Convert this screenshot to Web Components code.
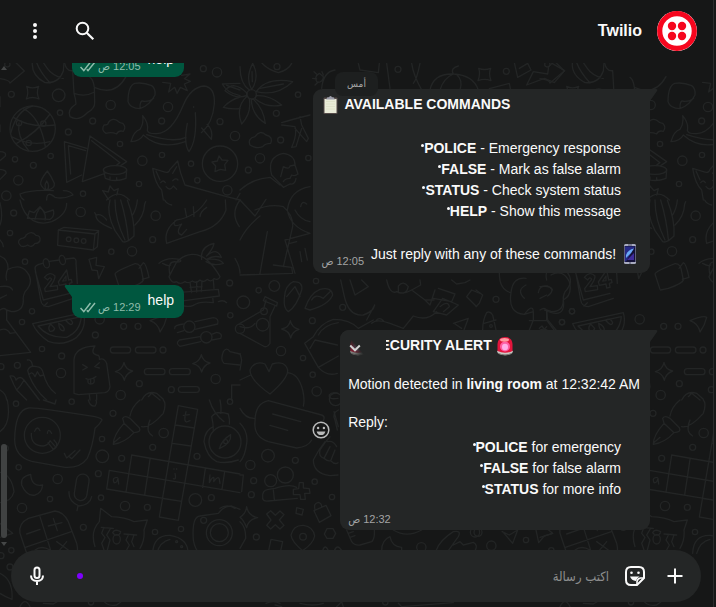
<!DOCTYPE html>
<html lang="ar" dir="rtl">
<head>
<meta charset="utf-8">
<title>Twilio</title>
<style>
  html, body { height: 100%; }
  body {
    margin: 0;
    background: #161717;
    color: #fafafa;
    font-family: "Liberation Sans", "DejaVu Sans Condensed", "DejaVu Sans", sans-serif;
    font-size: 14px;
    line-height: 21px;
  }
  b { font-weight: 700; }
</style>
</head>
<body>
<chat-app>
  <chat-header slot="header" name="Twilio"></chat-header>
  <chat-bubble side="out" time="12:05 ص">help</chat-bubble>
  <chat-bubble side="in" time="12:05 ص">
    <message-title slot="title"><emoji-icon slot="before" name="clipboard"></emoji-icon>AVAILABLE COMMANDS</message-title>
    <command-list slot="block">
      <command-item><b slot="key">POLICE</b> - Emergency response</command-item>
      <command-item><b slot="key">FALSE</b> - Mark as false alarm</command-item>
      <command-item><b slot="key">STATUS</b> - Check system status</command-item>
      <command-item><b slot="key">HELP</b> - Show this message</command-item>
    </command-list>
    Just reply with any of these commands! <emoji-icon name="phone"></emoji-icon>
  </chat-bubble>
  <chat-bubble side="out" time="12:29 ص">help</chat-bubble>
  <chat-bubble side="in" time="12:32 ص" active>
    <message-title slot="title"><emoji-icon slot="before" name="siren"></emoji-icon>SECURITY ALERT<emoji-icon slot="after" name="siren"></emoji-icon></message-title>
    <message-text slot="block">Motion detected in <b>living room</b> at 12:32:42 AM</message-text>
    <message-text slot="block">Reply:</message-text>
    <command-list slot="block" compact>
      <command-item><b slot="key">POLICE</b> for emergency</command-item>
      <command-item><b slot="key">FALSE</b> for false alarm</command-item>
      <command-item><b slot="key">STATUS</b> for more info</command-item>
    </command-list>
  </chat-bubble>
  <chat-composer slot="composer"></chat-composer>
</chat-app>

<script>
const define = (name, html, setup) => {
  const template = document.createElement('template');
  template.innerHTML = html;
  customElements.define(name, class extends HTMLElement {
    connectedCallback() {
      if (this.shadowRoot) return;
      const root = this.attachShadow({ mode: 'open' });
      root.append(template.content.cloneNode(true));
      if (setup) setup(this, root);
    }
  });
};

define('chat-wallpaper', `
  <style>
    :host { display: block; overflow: hidden; }
    svg { display: block; width: 100%; height: 100%; direction: ltr; }
    #tile { fill: none; stroke: #232525; stroke-width: 4; stroke-linecap: round; stroke-linejoin: round; }
  </style>
  <svg aria-hidden="true">
    <g id="tile">
      <g id="nw" transform="scale(.33333)">
        <path d="M0 236Q28 240 30 249L73 213L48 188M97 188Q94 226 135 248Q176 252 190 213L192 188M130 188L142 205Q155 225 190 236M110 188Q120 215 150 249"/>
        <path d="M80 259Q97 268 116 259Q108 278 117 297Q97 288 79 297Q87 278 80 259Z"/>
        <path d="M194 190Q200 215 218 212L222 280Q228 300 228 312Q200 330 210 350Q235 366 262 338Q285 325 284 308L283 262Q280 238 270 232M222 280Q255 292 284 276M283 262Q345 290 378 230"/>
        <path d="M404 250Q430 246 455 257Q467 265 465 285Q450 315 420 326Q390 326 384 305Q384 258 404 250ZM420 325Q419 298 432 304Q450 305 461 295"/>
        <path d="M488 247L512 250L506 276L524 262L531 280L541 262L562 272L553 252L571 244L553 236L570 222L545 226"/>
        <path d="M393 424Q402 393 420 388Q432 370 428 347Q447 370 442 392Q445 402 470 401Q515 400 550 315Q572 262 612 258Q646 262 643 312Q638 370 604 398M393 425Q420 424 430 405Q480 452 558 424M440 404Q520 430 558 412M562 370Q550 430 567 455Q592 420 586 338M605 384L634 418Q640 390 621 373M581 320V322"/>
        <circle cx="98" cy="386" r="68"/>
        <path d="M40 352Q90 385 165 375M98 318Q50 330 32 400M70 326Q120 350 136 440M150 342Q110 400 50 430M34 410Q90 440 150 425M57 369Q50 410 86 452"/>
        <path d="M318 400Q302 390 312 375Q325 375 325 368Q335 352 352 362Q358 370 368 370Q380 382 370 394Q355 390 350 402Q335 395 318 400Z"/>
        <path d="M260 445L193 425L200 547L245 525M257 452L205 437L212 522M315 520L247 545L270 408L380 485L362 497M275 422L360 488L350 495M311 512L316 535Q345 548 378 535L380 510M330 540V531M350 542V533"/>
        <ellipse cx="345" cy="510" rx="35" ry="13"/>
        <circle cx="660" cy="491" r="53"/>
        <path d="M657 468L666 480L684 481L674 494L677 511L661 508L645 515L647 498L636 486L652 483Z"/>
        <path d="M142 513Q120 540 122 553Q130 570 142 570Q165 565 163 550Q155 530 142 513ZM140 543Q130 560 140 572Q152 560 140 543ZM60 582Q95 568 160 572M190 572Q212 572 219 585Q190 598 165 592Q140 570 140 600M60 582Q62 595 72 600"/>
        <path d="M458 505L490 515Q506 522 510 508L533 483Q540 520 555 555L680 590L720 600M458 505Q465 550 485 570L490 600M468 513L480 540M530 500L518 520M482 548Q490 538 496 548M518 542Q528 532 534 540M498 560Q510 575 520 558L530 568"/>
        <path d="M720 250Q690 250 667 252Q680 278 720 287M720 326Q690 328 670 322Q690 300 720 291M680 256L720 270"/>
        <path d="M325 598L308 572L325 576L330 558L342 572L355 566L350 585M320 600Q355 565 388 600M0 455Q20 455 16 468L0 482M0 508Q20 510 18 520L0 538M720 580L708 600M0 290V320M0 375V395"/>
      </g>
      <g id="w" transform="translate(0 200) scale(.33333)">
        <path d="M60 0Q70 45 100 62Q125 75 155 65Q200 45 200 10M82 55L88 33L102 38L120 20L135 38L160 30Q165 50 150 58ZM105 58Q108 40 120 22Q140 40 135 60M0 8Q10 50 0 75"/>
        <path d="M330 0Q318 40 345 92L368 125Q380 130 402 108Q405 60 382 0M345 0Q345 60 375 120M362 0Q380 60 385 118M288 45Q285 65 335 85M288 45Q305 40 320 60M434 12Q432 50 405 75M398 45Q410 25 412 0M288 45L284 38M434 12L437 5"/>
        <path d="M500 130Q490 90 530 60Q590 50 620 0M500 130L600 95Q660 80 678 30L676 0M525 62Q515 85 545 72Q525 100 545 105L560 88M555 25L560 52M580 20L582 50M600 50Q600 35 620 22M494 0Q500 12 515 15"/>
        <path d="M63 138Q48 125 63 116Q78 113 78 105Q95 90 108 106Q122 106 120 122Q115 132 105 130Q95 145 83 135Q72 142 63 138Z"/>
        <path d="M175 90L285 102L280 150L173 136ZM175 90L192 82L296 92L285 102M296 92L292 140L280 150"/>
        <path d="M106 210Q100 195 128 190M148 184L178 180M198 177L222 174Q230 178 228 190L232 250M106 210L122 300Q125 320 145 320L220 295M106 215L130 300L210 280M132 318L142 308"/>
        <ellipse cx="139" cy="190" rx="9" ry="14" transform="rotate(-15 139 190)"/><ellipse cx="187" cy="180" rx="9" ry="14" transform="rotate(-15 187 180)"/>
        <path d="M133 232Q150 212 165 228Q166 238 150 260L172 257L173 269L136 275L134 266L155 238Q150 228 143 240ZM200 210L175 246L178 256L198 252L200 264L210 262L208 250L216 248L214 238L206 240ZM198 228L188 243L198 242Z"/>
        <path d="M267 178L290 172L288 196L313 200L296 236L292 212L276 210Z"/>
        <path d="M345 222Q345 215 405 191Q422 190 425 215L430 240Q428 250 385 265L362 270M345 222L360 268M417 205L430 188Q438 190 447 232L427 238"/>
        <path d="M507 230L530 186Q550 165 575 163Q620 160 660 230Q655 242 642 236Q632 248 622 238Q610 250 600 240Q588 252 577 243Q565 252 555 245Q540 255 530 245Q515 252 507 230ZM477 190Q500 170 538 178Q550 185 530 186Q500 180 510 225M488 190Q505 200 512 195M605 178Q600 140 642 130Q640 145 620 168Q650 140 664 172Q640 165 620 178Q660 175 670 190Q640 200 618 185"/>
        <path d="M530 278L655 268L658 288L530 305M570 248L575 278M590 245V276M606 243L604 275M570 262L606 260M640 240L642 265M655 305Q670 298 680 308M530 310Q560 325 580 316Q600 302 640 308L638 292M540 302V318"/>
        <path d="M98 371L250 338Q262 380 230 412Q190 440 145 424Q110 400 98 371ZM114 378L244 350Q240 395 200 412Q145 415 114 378ZM152 372Q142 385 150 394Q162 395 164 385ZM176 370Q178 395 192 392Q196 380 176 370ZM196 360Q212 352 218 368Q215 382 196 360Z"/>
        <path d="M0 168Q25 178 24 205Q15 225 20 240M24 208Q60 190 80 215Q105 245 75 275Q68 290 70 300Q70 335 35 335L20 330V360L92 457L0 467M0 330Q15 320 20 332M0 260Q30 255 38 270M0 390Q20 382 30 400L45 398"/>
        <path d="M450 362Q490 345 500 352Q495 375 480 396Q475 370 450 362ZM0 295L20 285"/>
        <path d="M524 386Q522 375 550 372M585 365L640 353Q658 355 653 372L585 388M552 392L532 398M540 439Q525 430 538 420L600 410M635 403L650 397Q670 400 662 415L636 420M602 425L540 439"/>
        <path d="M222 580L222 480Q225 440 285 438Q270 460 290 465Q300 465 298 478Q312 472 320 490L330 560Q328 575 315 578L235 584ZM268 584L270 600M290 584V600M248 494L262 502L248 510M298 488L284 500L298 504M258 536Q270 542 288 530M264 540Q262 552 272 552Q286 552 282 536M272 540V548"/>
        <rect x="331" y="441" width="61" height="18" rx="9"/><rect x="406" y="441" width="62" height="18" rx="9"/><rect x="433" y="506" width="62" height="18" rx="9"/><rect x="508" y="506" width="63" height="18" rx="9"/><rect x="535" y="560" width="63" height="17" rx="9"/>
        <path d="M372 487Q376 508 398 513Q378 520 373 541Q368 520 346 515Q368 508 372 487ZM604 464Q608 484 630 489Q610 496 605 516Q600 496 578 491Q600 484 604 464Z"/>
        <path d="M82 480Q95 478 97 495M83 512Q88 495 110 500Q125 500 130 520Q140 560 166 580M83 512L87 525Q95 510 105 530L112 515L120 528L130 525M88 528Q105 570 140 600M30 528Q45 525 48 540Q60 525 72 540Q65 555 50 570L42 555ZM72 540Q95 570 118 600M50 570L80 600"/>
        <path d="M720 495L672 490Q660 480 670 455Q680 440 690 455L720 462M425 600Q440 570 470 580L490 598M445 590L455 580L480 600M695 600V555L720 555M720 0Q690 40 718 80M705 175Q720 200 720 220M0 120Q10 130 10 140M0 570Q18 580 20 600"/>
      </g>
      <g id="sw" transform="translate(0 400) scale(.33333)">
        <path d="M44 120Q45 30 85 24Q100 20 285 50Q305 55 306 60Q300 72 285 85Q278 140 262 175Q240 205 195 202L95 184Q45 170 44 120ZM193 160L200 174L225 152M208 170L215 176L240 150M94 100Q92 138 130 138Q145 135 150 122M104 94Q112 75 120 92M142 100Q145 82 155 100M144 128L160 148Q172 142 170 130L162 120M150 122L168 142"/>
        <circle cx="127" cy="106" r="54"/>
        <path d="M340 133Q340 105 372 70L402 98Q375 128 340 133ZM340 130L360 112M372 70L368 55Q375 45 390 55L418 83Q425 97 402 98M390 48Q395 20 420 0M425 80Q450 85 490 40Q500 10 490 0M450 60Q435 95 458 108"/>
        <path d="M535 17L593 28L535 361L478 351L535 17M526 75L583 84M517 130L573 138M720 222L395 165L378 276M720 278L328 211L320 267L545 304M450 178L434 285M616 206L608 262M674 215L666 268M490 296L545 304"/>
        <path d="M558 35Q550 65 560 66L570 62M550 46L568 44M352 232Q335 232 342 248Q350 250 354 235L356 252M522 206V208M530 206V208M525 220Q530 240 520 236M628 240L630 225L628 248Q640 225 642 235L641 245Q655 225 658 238L660 250"/>
        <path d="M640 92Q640 70 635 50Q650 30 685 42Q690 60 688 72M628 0Q640 40 672 65M660 0Q665 25 662 40M612 125Q615 90 640 80M612 125Q620 170 650 185Q680 192 715 180M658 146Q665 120 692 104Q695 130 658 146Z"/>
        <circle cx="675" cy="126" r="48"/><circle cx="677" cy="125" r="6"/>
        <path d="M92 223Q60 230 65 255Q80 290 105 285Q125 280 128 255Q95 262 92 223Z"/>
        <rect x="226" y="222" width="38" height="80" rx="19" transform="rotate(9 245 262)"/>
        <path d="M207 275Q205 305 237 318Q270 315 275 290M234 318L231 332"/>
        <path d="M60 400Q55 370 85 355L165 333Q190 335 205 365L230 430Q235 450 230 460M60 400L80 460M76 442L214 395M120 350L155 460M80 402L120 388M145 378L186 368M160 355L172 392M170 425L205 450M200 425L175 455M105 450Q125 435 150 450"/>
        <path d="M285 440Q270 395 298 365L302 325L335 350Q375 352 402 365L442 360L432 390Q435 420 420 445M304 382L340 385M372 402L410 405M312 382L305 400L315 412L305 430L312 450M330 388L320 405L330 420L322 450M385 405L378 420L388 435L380 450M402 405L395 425L402 440M338 398Q345 385 362 395Q360 408 345 405Z"/>
        <ellipse cx="350" cy="418" rx="11" ry="14"/>
        <path d="M458 460Q460 405 510 406Q565 415 564 460M470 460Q480 425 510 418M580 420Q575 350 600 348L655 340Q670 318 695 318L720 328M580 420Q585 450 600 460M660 325Q680 310 705 325"/>
        <circle cx="658" cy="398" r="39"/><circle cx="658" cy="398" r="27"/>
        <path d="M0 217Q35 225 42 275Q35 305 0 308M0 370L38 400L0 412M0 520Q40 540 36 598Q15 590 0 580M265 0Q270 20 285 18Q292 10 288 0M130 0L165 12L168 0M22 0Q35 70 0 95M60 620Q75 590 90 620M130 610L160 612L180 600M310 600Q320 620 350 615L370 600"/>
      </g>
      <g id="n" transform="translate(240 60) scale(.33333)">
        <circle cx="35" cy="103" r="14"/>
        <path d="M35 89Q15 55 38 10Q60 50 35 89ZM49 95Q80 50 158 65Q110 110 49 95ZM49 107Q90 105 125 135Q80 145 45 116ZM40 118Q70 145 76 190Q35 165 34 118ZM22 108Q-15 140 5 192Q35 160 28 117ZM20 98Q-20 60 -45 92Q-10 120 20 106ZM28 90Q0 70 0 20"/>
        <path d="M66 10Q85 30 115 38Q145 30 155 10M36 35L37 65M60 85L130 72"/>
        <path d="M30 255Q22 235 45 230Q60 208 78 225Q100 230 92 250Q75 250 68 260Q50 268 30 255ZM125 188Q150 180 210 165M125 195L165 200Q172 225 155 262L168 260L185 205M180 170L185 195L205 235L200 245L165 205"/>
        <path d="M95 345Q80 290 130 280Q165 285 165 315L150 318Q148 330 130 320Q125 340 122 350M165 315L174 342Q165 350 155 345L150 355Q135 355 130 365M95 345L130 382L150 372Q165 375 168 355"/>
        <path d="M0 390Q40 355 90 352L120 375M0 420L45 468L78 418M45 450Q90 430 130 440Q160 465 158 500L130 620M60 468Q20 500 0 540M82 515L60 640M100 615L155 622L158 640L0 645M210 380Q150 390 142 450Q150 500 210 520M182 440Q185 420 200 432M165 450Q180 480 210 485M135 540L210 520M135 540L165 640M150 550L170 545M180 575L185 605M195 565L202 600"/>
        <path d="M238 40Q220 50 232 68Q250 65 250 50ZM222 35L232 44M218 55L230 57M225 75L235 66M246 35L250 45M245 85Q250 35 285 30M355 10L360 30L415 38L418 10M440 10L450 85M515 10Q520 45 545 90M540 10Q530 60 520 70M570 90Q580 40 640 42Q700 45 715 90M600 90Q610 55 640 42M660 90Q670 60 650 44M640 42Q630 25 655 18M375 45V80M400 45V80"/>
      </g>
      <g id="ne" transform="translate(476 0) scale(.33333)">
        <path d="M8 205Q25 212 44 205Q37 222 45 242Q25 234 6 242Q14 222 8 205ZM115 188L125 232L165 210L155 190L130 205M152 255L172 215L215 222L218 200L228 190L266 212L235 248L205 235ZM40 266L100 250L103 266"/>
      </g>
      <g id="mid" transform="translate(240 280) scale(.33333)">
        <path d="M133 55Q135 15 160 5Q190 5 185 30Q170 80 145 95Q130 85 133 55ZM140 50L165 20L180 50M195 85Q210 40 240 28Q275 20 278 45Q265 75 210 90ZM215 60Q225 40 250 55L270 35"/>
        <path d="M75 50L112 68L110 78L70 62ZM78 60L70 90L0 130M105 78L90 110V190Q80 205 70 198L0 160M0 140Q30 150 45 130"/>
        <circle cx="68" cy="134" r="19"/><circle cx="72" cy="94" r="10"/>
        <path d="M151 122Q155 143 177 148Q157 154 152 174Q148 153 125 147Q148 142 151 122Z"/>
        <path d="M194 190L220 170Q240 130 280 118Q330 118 355 145L400 120M194 190L235 262L295 228M210 205L225 180L292 195M235 262Q260 290 292 280M235 165Q250 135 295 128M395 130Q410 115 450 130L490 145M408 122Q418 110 430 122"/>
        <path d="M302 0L312 45Q325 110 370 105Q400 95 404 75L380 120M330 0L345 45L385 20L365 0M440 0Q450 45 470 35Q490 45 515 30L555 60L570 75L585 30M475 18Q490 0 505 20Q500 45 475 38ZM540 0L542 15L515 30M555 60L582 60M595 25L645 42L635 65L580 55M608 55L655 75L620 105L580 95ZM600 80Q625 60 628 80L610 95M490 145L520 108Q560 125 590 95M680 50L695 30L720 40M680 50L710 80M640 130L685 115L672 150M645 132L665 145M635 0L650 12L675 8L690 0"/>
        <path d="M90 342Q30 300 30 270Q45 240 75 252L87 275L97 252Q135 240 143 270Q145 295 90 342ZM142 278Q175 280 188 330Q195 360 190 378M0 300L32 285M45 425Q45 370 85 362L245 405Q260 410 245 430M45 425Q40 470 85 485L170 504Q205 500 215 480M98 402L182 425M90 436L143 451M0 385Q15 415 42 415M0 430Q25 455 20 490Q15 530 0 545M0 220L5 240L0 270"/>
        <path d="M295 390Q275 400 285 420L292 450M282 395L295 440M294 355Q265 360 268 345Q275 335 294 340"/>
      </g>
      <g id="s" transform="translate(240 430) scale(.33333)">
        <path d="M220 90Q235 60 255 35M220 90Q220 130 270 137L294 135M240 60Q255 35 270 20M240 60Q235 80 252 85Q262 95 272 92Q285 105 294 98M252 85L270 50M272 92L285 60M262 35Q280 30 290 50"/>
        <circle cx="136" cy="135" r="24"/><circle cx="92" cy="152" r="18"/>
        <path d="M68 205Q65 180 85 178L105 175Q150 160 170 172M68 205Q70 215 85 213L172 205M100 180L103 208M178 158H190V174L208 176L210 190L194 190L196 208L182 208L180 194L160 194L160 178L176 176Z"/>
        <path d="M20 230Q25 258 53 263Q25 268 20 293Q10 268 0 262Q18 250 20 230ZM80 252L92 242L106 256L120 243L132 254L118 270L132 286L120 297L106 284L92 297L80 286L93 270ZM170 233L190 238L186 255L168 250ZM222 242L258 226L273 257L238 277ZM225 238Q220 220 235 217Q245 220 245 230M253 312L261 296H279L287 310L279 325H261Z"/>
        <path d="M188 362Q155 335 153 315Q160 285 190 286Q220 290 224 318Q220 340 188 362ZM93 328L128 335L122 362M93 328L86 362M0 275Q18 290 17 325L0 355M0 135L10 135L5 185M248 362Q255 340 265 362M283 362Q292 340 305 362M320 300L335 335Q345 348 360 345L395 335Q405 325 403 300M325 310L340 305M330 322L345 317M425 362Q425 330 450 320Q455 350 485 352V362M460 300Q500 325 545 300M588 362Q600 330 640 305Q665 300 655 320L625 362M640 345L660 335L670 345L700 337Q715 345 705 362"/>
        <circle cx="189" cy="320" r="10"/>
        <path d="M78 520Q100 510 120 520M105 525L125 530M290 530L305 515L310 530M475 520L485 530L640 518M180 520Q220 530 250 520"/>
      </g>
      <g id="e" transform="translate(476 270) scale(.33333)">
        <path d="M70 10Q70 60 105 68Q95 130 145 133L172 125V150L160 180M145 133Q170 100 172 125M105 68Q110 20 150 25M215 78Q240 60 215 48Q190 45 187 68M145 85Q120 60 150 45M205 120Q270 150 262 90Q290 75 280 35Q260 -5 225 15M212 125L215 150L240 180M190 175L198 168L205 178L212 170M160 152H215M0 60L20 75L10 100L0 110M20 180Q20 150 32 128Q42 122 50 135L60 180M24 160L60 150"/>
      </g>
      <g id="se" transform="translate(476 430) scale(.33333)">
        <path d="M78 305L100 315L125 300M80 305L110 340L125 300M180 300L188 338L205 318L230 310"/>
      </g>
    </g>
  </svg>`, (host, root) => {
  const NS = 'http://www.w3.org/2000/svg';
  // Small bubbles between the doodles: x, y, radius in each region's own units.
  const dots = {
    nw: [[176,286,19],[34,283,9],[180,338,8],[278,363,9],[332,315,14],[504,321,14],[610,206,9],[651,217,14],[205,396,9],[485,363,9],[660,365,9],[705,408,14],[360,432,8],[45,478,8],[100,496,9],[152,468,8],[55,541,14],[19,587,14],[249,581,8],[427,482,14],[486,465,8],[573,491,8],[417,552,8],[592,541,8],[682,571,14],[57,369,8],[130,371,8],[86,429,8],[22,193,8]],
    w: [[41,39,9],[242,36,14],[467,47,14],[30,99,8],[206,118,7],[229,121,7],[251,123,7],[334,155,8],[396,154,14],[458,119,9],[75,185,8],[689,249,9],[96,334,8],[66,366,8],[299,358,14],[371,379,9],[414,379,9],[286,405,9],[691,346,8],[568,380,17],[619,412,17],[126,447,8],[185,468,9],[489,450,9],[183,519,14],[52,496,9],[3,500,9],[418,551,9],[514,569,9],[647,537,14],[362,585,14],[720,386,14]],
    sw: [[48,11,8],[339,40,9],[306,117,8],[491,99,14],[458,142,9],[307,169,19],[365,175,9],[591,169,9],[16,145,9],[56,202,8],[173,237,14],[295,221,9],[150,297,8],[303,293,8],[375,318,14],[442,322,9],[586,300,19],[634,293,9],[66,324,14],[250,382,9],[465,396,8],[543,387,8],[611,361,9],[34,451,8],[3,467,9],[30,501,9],[215,5,8],[690,5,8],[273,607,8],[530,425,3],[545,440,3]],
    n: [[111,20,9],[174,104,8],[109,160,9],[122,240,9],[60,295,14],[25,330,9],[205,294,8],[474,28,9]],
    ne: [[91,214,9]],
    mid: [[56,31,8],[103,18,16],[10,67,19],[228,3,8],[308,82,9],[217,122,9],[123,213,14],[189,234,8],[218,284,8],[230,334,14],[287,358,19]],
    s: [[84,77,19],[166,91,9],[31,105,14],[41,152,9],[224,155,8],[34,194,9],[276,201,8],[49,321,9],[544,352,14],[705,307,14],[436,517,8]],
    e: [[60,88,9],[288,124,8],[258,157,8],[45,168,4]],
    se: [[46,347,14],[150,330,8],[6,307,12]]
  };
  for (const [id, list] of Object.entries(dots)) {
    for (const [x, y, r] of list) {
      const c = document.createElementNS(NS, 'circle');
      c.setAttribute('cx', x); c.setAttribute('cy', y); c.setAttribute('r', r);
      root.getElementById(id).append(c);
    }
  }
  const svg = root.querySelector('svg');
  for (const x of [540, 1080, 1620]) {
    const use = document.createElementNS(NS, 'use');
    use.setAttribute('href', '#tile');
    use.setAttribute('x', x);
    svg.append(use);
  }
});

define('chat-app', `
  <style>
    :host { display: grid; grid-template-rows: auto 1fr auto; height: 100vh; box-sizing: border-box; position: relative; overflow: hidden; margin-right: 2px; border-right: 1px solid #2c2d2d; }
    chat-wallpaper { position: absolute; inset: 0; z-index: -1; }
    main { position: relative; min-height: 0; overflow: hidden; display: flex; direction: ltr; }
    .log { flex: 1; display: flex; flex-direction: column; justify-content: flex-end; gap: 12px; padding: 0 63px 20px 64px; min-width: 0; }
    .day { position: absolute; top: 9px; left: 0; right: 0; width: max-content; margin: 0 auto; padding: 0 12px; border-radius: 8px; background: #1d1f1f; color: #a5a6a6; font-size: 10px; line-height: 24px; }
    .bar { width: 8px; display: flex; flex-direction: column; align-items: center; justify-content: flex-end; gap: 4px; padding-bottom: 4px; box-sizing: border-box; }
    .bar i { width: 6px; height: 94px; border-radius: 3px; background: #404242; }
    .bar svg { width: 6px; height: 4px; fill: #454747; }
    .bar svg:first-child { margin: 3px 0 auto; }
  </style>
  <chat-wallpaper></chat-wallpaper>
  <slot name="header"></slot>
  <main>
    <div class="bar" aria-hidden="true">
      <svg viewBox="0 0 6 4"><path d="M3 0L6 4H0Z"/></svg><i></i><svg viewBox="0 0 6 4"><path d="M3 4L6 0H0Z"/></svg>
    </div>
    <div class="log"><slot></slot></div>
    <span class="day" dir="rtl">أمس</span>
  </main>
  <slot name="composer"></slot>`);

define('chat-header', `
  <style>
    :host { display: block; background: #161717; }
    header { display: flex; align-items: center; gap: 15px; height: 63px; padding: 0 16px 2px 23px; box-sizing: border-box; }
    h1 { margin: 0; margin-left: auto; font-size: 16px; line-height: 21px; font-weight: 700; }
    nav { display: flex; gap: 26px; }
    button { border: 0; padding: 0; background: none; color: inherit; width: 24px; height: 24px; }
    svg { display: block; }
  </style>
  <header>
    <svg width="40" height="40" viewBox="0 0 40 40" role="img" aria-label="Twilio"><circle cx="20" cy="20" r="20" fill="#fff"/><circle cx="20" cy="20" r="17.3" fill="none" stroke="#f6061e" stroke-width="5.2"/><g fill="#f6061e"><circle cx="15" cy="15" r="4.2"/><circle cx="25" cy="15" r="4.2"/><circle cx="15" cy="25" r="4.2"/><circle cx="25" cy="25" r="4.2"/></g></svg>
    <h1></h1>
    <nav>
      <button aria-label="بحث"><svg width="24" height="24" viewBox="0 0 24 24" fill="none" stroke="currentColor" stroke-width="2"><circle cx="9.5" cy="9.5" r="5.8"/><path d="M13.7 13.7L20.3 20.3" stroke-width="2.2"/></svg></button>
      <button aria-label="القائمة"><svg width="24" height="24" viewBox="0 0 24 24" fill="currentColor"><circle cx="12" cy="6" r="2"/><circle cx="12" cy="12" r="2"/><circle cx="12" cy="18" r="2"/></svg></button>
    </nav>
  </header>`, (host, root) => { root.querySelector('h1').textContent = host.getAttribute('name'); });

define('chat-bubble', `
  <style>
    :host { display: block; position: relative; flex: none; direction: ltr; box-sizing: border-box; width: max-content; max-width: 100%; border-radius: 9px; padding: 5px 10px 7px 8px; background: #242626; --meta: #a3a4a4; }
    :host([side=in]) { align-self: flex-end; border-top-right-radius: 0; padding-bottom: 8px; }
    :host([side=out]) { align-self: flex-start; border-top-left-radius: 0; background: #00573f; --meta: #8fbdac; }
    :host([active]) { padding-bottom: 0; }
    .tail { position: absolute; top: 0; width: 8px; height: 12px; fill: #242626; }
    :host([side=in]) .tail { left: 100%; }
    :host([side=out]) .tail { right: 100%; fill: #00573f; transform: scaleX(-1); }
    .last { display: flex; align-items: flex-end; gap: 7px; }
    .meta { display: flex; align-items: center; gap: 2px; color: var(--meta); font-size: 11px; line-height: 15px; margin-bottom: -4px; }
    .ticks { display: none; }
    :host([side=out]) .ticks { display: block; }
    .react, .menu { display: none; border: 0; padding: 0; color: #b9baba; }
    :host([active]) .react { display: block; position: absolute; right: calc(100% + 10px); top: calc(50% - 9px); width: 18px; height: 18px; background: none; }
    :host([active]) .menu { display: block; position: absolute; left: 0; top: 0; width: 46px; height: 32px; border-radius: 9px 0 0 0; background: linear-gradient(50deg, #24262600 15%, #242626 42%); }
    svg { display: block; }
    .menu svg { margin: 1px 0 0 4px; }
    :host([active]) .meta { margin: 12px 0 3px; }
  </style>
  <svg class="tail" viewBox="0 0 8 12" aria-hidden="true"><path d="M0 0H6Q8 0 7 2L0 12Z"/></svg>
  <slot name="title"></slot>
  <slot name="block"></slot>
  <div class="last">
    <div class="meta">
      <svg class="ticks" width="16" height="11" viewBox="0 0 16 11" fill="none" stroke="currentColor" stroke-width="1.5"><path d="M.5 6L3.8 9.600L10.500 1M6.800 8.200L8 9.600L15 1"/></svg>
      <time dir="rtl"></time>
    </div>
    <div class="body"><slot></slot></div>
  </div>
  <button class="react" aria-label="تفاعل"><svg width="18" height="18" viewBox="0 0 18 18"><circle cx="9" cy="9" r="7.8" fill="none" stroke="currentColor" stroke-width="1.5"/><circle cx="6.1" cy="7" r="1.2" fill="currentColor"/><circle cx="11.9" cy="7" r="1.2" fill="currentColor"/><path d="M4.6 10.4H13.4Q12.5 14 9 14T4.6 10.4Z" fill="currentColor"/></svg></button>
  <button class="menu" aria-label="خيارات"><svg width="22" height="24" viewBox="0 0 22 24" fill="none" stroke="#d0d1d1" stroke-width="2"><path d="M6.2 10.5L11 15.3L15.8 10.5"/></svg></button>`,
  (host, root) => { root.querySelector('time').textContent = host.getAttribute('time'); });

define('message-title', `
  <style>:host { display: flex; align-items: center; gap: 3px; font-weight: 700; height: 21px; margin-bottom: 18px; }</style>
  <slot name="before"></slot><span><slot></slot></span><slot name="after"></slot>`);

define('message-text', `
  <style>:host { display: block; margin-bottom: 17px; }</style><slot></slot>`);

define('command-list', `
  <style>
    :host { display: block; margin: 23px 19px 22px 0; }
    :host([compact]) { margin: -13px 19px 0 0; }
    div { display: flex; flex-direction: column; align-items: flex-end; }
  </style>
  <div role="list"><slot></slot></div>`);

define('command-item', `
  <style>
    :host { display: block; }
    i { display: inline-block; width: 3px; height: 3px; border-radius: 50%; background: currentColor; vertical-align: 6px; }
  </style>
  <div role="listitem"><i></i><slot name="key"></slot><slot></slot></div>`);

const emoji = {
  clipboard: '<rect x="2.5" y="2.5" width="14" height="16.5" rx="1" fill="#544a48"/><path d="M3.5 4H15.5V18H3.5Z" fill="#e9ebd8"/><path d="M5 6.500H14M5 9H14M5 11.500H14M5 14H14" stroke="#dbdfc5" stroke-width=".8"/><path d="M5 4.500L6.500 2.200H8Q9.500 -.2 11 2.200H12.500L14 4.500Z" fill="#9a9ca8"/>',
  phone: '<rect x="4" y="0" width="12" height="20" rx="1.500" fill="#a9acc0"/><rect x="4.500" y="2" width="11" height="16" fill="#141238"/><path d="M5 2.500H15L6 17.500H5Z" fill="#262a86"/><path d="M6 11Q8 5.500 14 4.500L11 9L6 14Z" fill="#69a9f5"/><path d="M7 16L14 9V16Z" fill="#3f2c9c"/><path d="M8 1H12M9 19H11" stroke="#4b4d66"/>',
  siren: '<path d="M2 15Q10 12 18 15L17 17.500Q10 21 3 17.500Z" fill="#c9c9c4"/><path d="M3 17.300Q10 20.500 17 17.300" stroke="#77746f" fill="none"/><path d="M2.500 15V8Q3 1 10 1T17.500 8V15Q10 18.500 2.500 15Z" fill="#e3153c"/><ellipse cx="10" cy="10.500" rx="5" ry="5" fill="#ff5fa5"/><ellipse cx="10" cy="11" rx="3" ry="3.300" fill="#ffb0ea"/><ellipse cx="9.500" cy="3.800" rx="4.500" ry="1.900" fill="#ff9ba4"/>'
};
define('emoji-icon', `
  <style>:host { display: inline-block; width: 20px; height: 20px; vertical-align: -5px; } svg { display: block; }</style>
  <svg width="20" height="20" viewBox="0 0 20 20" aria-hidden="true"></svg>`,
  (host, root) => { root.querySelector('svg').innerHTML = emoji[host.getAttribute('name')]; });

define('chat-composer', `
  <style>
    :host { display: block; padding: 0 12px 5px 11px; }
    form { display: flex; align-items: center; gap: 14px; height: 52px; padding: 0 14px; border-radius: 26px; background: #242626; }
    button { border: 0; padding: 0; background: none; color: inherit; width: 24px; height: 24px; flex: none; }
    .sticker { margin-right: 2px; }
    input { flex: 1; min-width: 0; border: 0; outline: 0; padding: 0; background: none; color: inherit; font: inherit; font-size: 13px; height: 24px; margin: 0; }
    input::placeholder { color: #8d8e8e; opacity: 1; }
    i { width: 6px; height: 6px; border-radius: 50%; background: #7f00ff; margin-left: 14px; }
    svg { display: block; }
  </style>
  <form>
    <button type="button" aria-label="إرفاق"><svg width="24" height="24" viewBox="0 0 24 24" fill="none" stroke="currentColor" stroke-width="2"><path d="M12 4.500V19.500M4.500 12H19.500"/></svg></button>
    <button type="button" class="sticker" aria-label="ملصقات"><svg width="24" height="24" viewBox="0 0 24 24" fill="none" stroke="currentColor" stroke-width="2"><path d="M8 3H16Q21 3 21 8V14L14 21H8Q3 21 3 16V8Q3 3 8 3Z"/><path d="M21 14H17.500Q14.500 14.500 14 17.500V21" stroke-width="1.600"/><circle cx="8.500" cy="8.800" r="1.300" fill="currentColor" stroke="none"/><circle cx="15.500" cy="8.800" r="1.300" fill="currentColor" stroke="none"/><path d="M7 12.500H16.500Q13.500 14 13 17Q8.500 16.500 7 12.500Z" fill="currentColor" stroke="none"/></svg></button>
    <input type="text" dir="rtl" placeholder="اكتب رسالة" aria-label="اكتب رسالة">
    <i></i>
    <button type="button" aria-label="رسالة صوتية"><svg width="24" height="24" viewBox="0 0 24 24" fill="none" stroke="currentColor" stroke-width="2"><rect x="9.500" y="3.500" width="5" height="10.500" rx="2.500"/><path d="M6 11.500Q6 17 12 17T18 11.500M12 17V21"/></svg></button>
  </form>`);
</script>
</body>
</html>
